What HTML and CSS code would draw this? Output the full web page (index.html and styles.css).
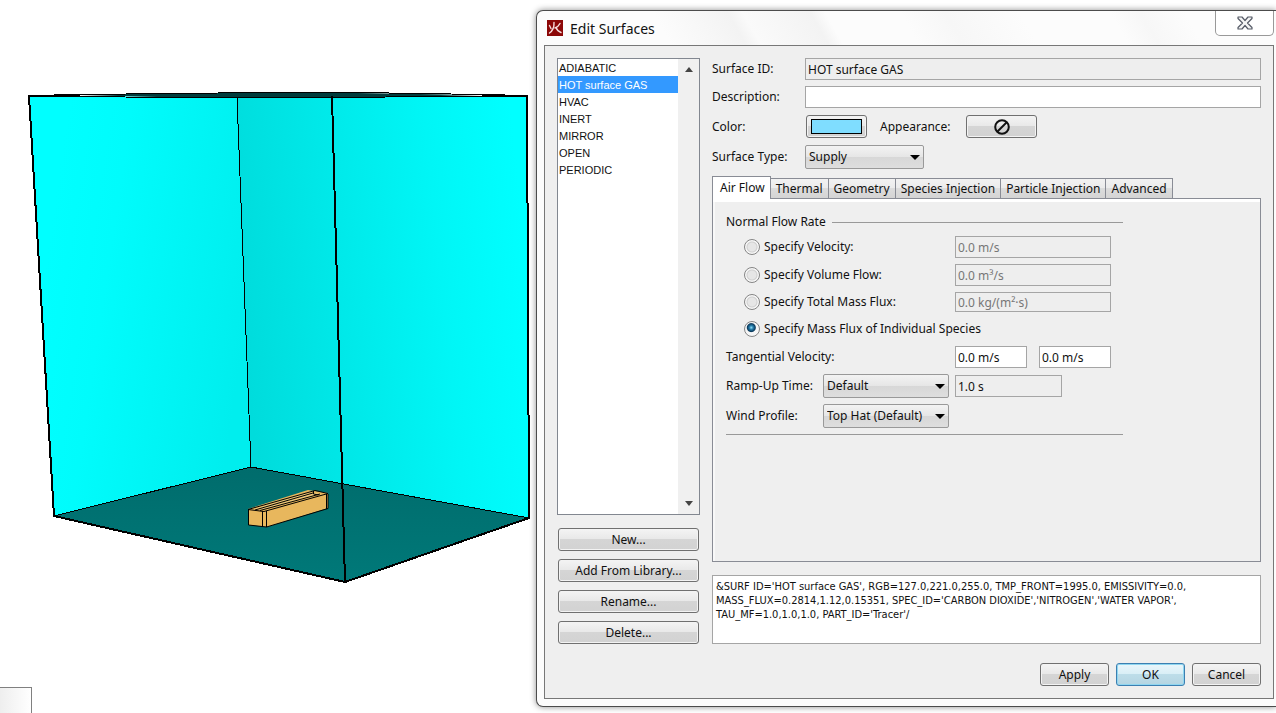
FILE: index.html
```html
<!DOCTYPE html>
<html lang="en">
<head>
<meta charset="utf-8">
<title>Edit Surfaces</title>
<link rel="stylesheet" href="styles.css">
</head>
<body>
<main class="workspace">
  <section class="scene" aria-label="3D view">
    <svg class="scene-view" viewBox="0 0 536 687" role="img" aria-label="Room model">
      <defs>
        <linearGradient id="wallLeft" gradientUnits="userSpaceOnUse" x1="40" y1="300" x2="245" y2="330">
          <stop offset="0" stop-color="#00ffff"/><stop offset="0.3" stop-color="#00fcfc"/><stop offset="1" stop-color="#00eeee"/>
        </linearGradient>
        <linearGradient id="wallBack" gradientUnits="userSpaceOnUse" x1="240" y1="300" x2="528" y2="270">
          <stop offset="0" stop-color="#00dcdc"/><stop offset="0.35" stop-color="#00e9e9"/><stop offset="0.7" stop-color="#00f6f6"/><stop offset="1" stop-color="#00ffff"/>
        </linearGradient>
        <linearGradient id="floor" x1="0" y1="0" x2="0" y2="1">
          <stop offset="0" stop-color="#006c6c"/><stop offset="1" stop-color="#007979"/>
        </linearGradient>
      </defs>
      <path d="M29 96 237 97 251 467 54 516z" fill="url(#wallLeft)"/>
      <path d="M237 97 527 96 529 518 251 467z" fill="url(#wallBack)"/>
      <path d="M54 516 251 467 529 518 345 582z" fill="url(#floor)"/>
      <path d="M80 95 172 93 264 93 358 93 420 94 482 95 440 96 332 98 157 97z" fill="#003c3c"/>
      <g fill="none" stroke="#000" shape-rendering="crispEdges">
        <path d="M29 95.500 80 94.500 172 93.500 264 92.500 358 92.500 420 93.500 482 94.500 527 95.500M29 95.500 157 97.500 332 97.500 440 96.500 527 95.500"/>
        <path d="M237 97 251 467M54 516 251 467 529 518"/>
        <path d="M29 96 54 516 345 582 529 518 527 96M332 96 345 582M28 96h52M482 96h46" stroke-width="2"/>
      </g>
      <path d="M248 509 308 490 328 493 328 508 267 527 249 525z" fill="#e8b75d"/>
      <path d="M253 509 309 492 321 494 262 510z" fill="#efc878"/>
      <g fill="none" stroke="#000">
        <path d="M248 509.500 264 511.500 328 493.500 315 490.500zM248.500 509v16l18 2L328 508.500V494"/>
        <path d="M255 510 313 493M260 510.500 320 494M313.500 491v3l5 1M262.500 511v16M266.500 511v16M326.500 494v15" stroke-width="1"/>
      </g>
    </svg>
    <div class="dock-corner"></div>
  </section>

  <section class="dialog" role="dialog" aria-labelledby="dialog-title">
    <header class="titlebar">
      <svg class="app-icon" viewBox="0 0 16 16" aria-hidden="true">
        <rect width="16" height="16" fill="#8c0707"/>
        <path d="M7 2.500c.3 5-1 8-4.500 10.500M9 7.500c1 2.500 2.500 4.200 5 5M2.500 5.500l1.500 3M13 3.500c-1 2-2.500 3.500-5 4.500" fill="none" stroke="#f8dede" stroke-width="1.400" stroke-linecap="round"/>
      </svg>
      <h1 class="title" id="dialog-title">Edit Surfaces</h1>
      <button class="close" aria-label="Close">
        <svg viewBox="0 0 16 14" width="16" height="14" aria-hidden="true">
          <path d="M1 1h4l3 3.500L11 1h4v1.500L10.500 7 15 11.500V13h-4L8 9.500 5 13H1v-1.500L5.500 7 1 2.500z" fill="#f4f4f4" stroke="#555a66" stroke-width="1.200" stroke-linejoin="round"/>
        </svg>
      </button>
    </header>

    <div class="frame">
      <div class="columns">
        <aside class="sidebar">
          <div class="listbox">
            <ul class="items" role="listbox" aria-label="Surfaces">
              <li class="item" role="option">ADIABATIC</li>
              <li class="item selected" role="option" aria-selected="true">HOT surface GAS</li>
              <li class="item" role="option">HVAC</li>
              <li class="item" role="option">INERT</li>
              <li class="item" role="option">MIRROR</li>
              <li class="item" role="option">OPEN</li>
              <li class="item" role="option">PERIODIC</li>
            </ul>
            <div class="scrollbar" aria-hidden="true">
              <span class="tri up"></span>
              <span class="tri down"></span>
            </div>
          </div>
          <div class="actions">
            <button class="btn">New...</button>
            <button class="btn">Add From Library...</button>
            <button class="btn">Rename...</button>
            <button class="btn">Delete...</button>
          </div>
        </aside>

        <form class="details">
          <div class="row">
            <label class="label" for="surface-id">Surface ID:</label>
            <input class="field readonly grow" id="surface-id" value="HOT surface GAS" readonly>
          </div>
          <div class="row">
            <label class="label" for="description">Description:</label>
            <input class="field grow" id="description">
          </div>
          <div class="row buttons-row">
            <label class="label" for="color">Color:</label>
            <button class="btn color-btn" id="color" type="button" aria-label="Color"><span class="swatch"></span></button>
            <label class="appearance-label" for="appearance">Appearance:</label>
            <button class="btn appearance-btn" id="appearance" type="button" aria-label="Appearance">
              <svg viewBox="0 0 16 16" width="16" height="16" aria-hidden="true"><circle cx="8" cy="8" r="6.800" fill="none" stroke="#111" stroke-width="2"/><path d="M12.500 3.500l-9 9" stroke="#111" stroke-width="2"/></svg>
            </button>
          </div>
          <div class="row">
            <label class="label" for="surface-type">Surface Type:</label>
            <span class="combo combo-type"><select id="surface-type"><option>Supply</option></select></span>
          </div>

          <div class="tabs" role="tablist">
            <button class="tab active" type="button" role="tab" aria-selected="true">Air Flow</button>
            <button class="tab" type="button" role="tab">Thermal</button>
            <button class="tab" type="button" role="tab">Geometry</button>
            <button class="tab" type="button" role="tab">Species Injection</button>
            <button class="tab" type="button" role="tab">Particle Injection</button>
            <button class="tab" type="button" role="tab">Advanced</button>
          </div>
          <div class="panel" role="tabpanel">
            <div class="flow">
              <div class="section-title"><span>Normal Flow Rate</span><span class="rule"></span></div>
              <div class="flow-row">
                <label class="choice"><input type="radio" name="flow">Specify Velocity:</label>
                <input class="field long" aria-label="Velocity" value="0.0 m/s" disabled>
              </div>
              <div class="flow-row">
                <label class="choice"><input type="radio" name="flow">Specify Volume Flow:</label>
                <input class="field long" aria-label="Volume flow" value="0.0 m³/s" disabled>
              </div>
              <div class="flow-row">
                <label class="choice"><input type="radio" name="flow">Specify Total Mass Flux:</label>
                <input class="field long low" aria-label="Total mass flux" value="0.0 kg/(m²·s)" disabled>
              </div>
              <div class="flow-row single">
                <label class="choice"><input type="radio" name="flow" checked>Specify Mass Flux of Individual Species</label>
              </div>
              <div class="flow-row">
                <label for="tan-u">Tangential Velocity:</label>
                <div class="pair">
                  <input class="field short" id="tan-u" value="0.0 m/s">
                  <input class="field short" aria-label="Tangential velocity, second component" value="0.0 m/s">
                </div>
              </div>
              <div class="profile-row">
                <label for="ramp">Ramp-Up Time:</label>
                <span class="combo"><select id="ramp"><option>Default</option></select></span>
                <input class="field readonly ramp-value" aria-label="Ramp-up time value" value="1.0 s" readonly>
              </div>
              <div class="profile-row">
                <label for="wind">Wind Profile:</label>
                <span class="combo"><select id="wind"><option>Top Hat (Default)</option></select></span>
              </div>
              <hr class="end-rule">
            </div>
          </div>
          <textarea class="record" aria-label="FDS record" readonly>&amp;SURF ID='HOT surface GAS', RGB=127.0,221.0,255.0, TMP_FRONT=1995.0, EMISSIVITY=0.0,
MASS_FLUX=0.2814,1.12,0.15351, SPEC_ID='CARBON DIOXIDE','NITROGEN','WATER VAPOR',
TAU_MF=1.0,1.0,1.0, PART_ID='Tracer'/</textarea>
        </form>
      </div>

      <footer class="footer">
        <button class="btn">Apply</button>
        <button class="btn primary">OK</button>
        <button class="btn">Cancel</button>
      </footer>
    </div>
  </section>
</main>
</body>
</html>
```
FILE: styles.css
```css
* { box-sizing: border-box; }

body {
  margin: 0;
  background: #fff;
  color: #111;
  font: 12px/16px "Noto Sans", "DejaVu Sans Condensed", sans-serif;
}

button, input, select, textarea { font: inherit; color: inherit; margin: 0; }

.workspace {
  display: grid;
  grid-template-columns: 536px minmax(0, 1fr);
  min-height: 100vh;
  overflow: hidden;
}

/* 3D view */
.scene { display: flex; flex-direction: column; justify-content: space-between; }
.scene-view { display: block; width: 100%; }
.dock-corner {
  width: 32px;
  height: 26px;
  border: solid #808080;
  border-width: 1px 1px 0 0;
  background: linear-gradient(90deg, #eee, #fff);
}

/* Dialog window */
.dialog {
  display: flex;
  flex-direction: column;
  margin: 10px 0 6px;
  padding: 0 2px 7px 7px;
  border: 1px solid #4c4c4c;
  border-right: 0;
  border-radius: 7px 0 0 7px;
  background: #fcfcfc;
  box-shadow: 0 0 6px rgba(0, 0, 0, 0.45);
}
.titlebar {
  display: flex;
  height: 34px;
  background: linear-gradient(60deg, transparent 17%, #f3f3f3 27%, #fafafa 29%, #f3f3f3 38%, transparent 40%, transparent 50%, #f7f7f7 56%, transparent 66%, transparent 78%, #f7f7f7 82%, transparent 88%);
}
.app-icon { width: 16px; height: 16px; margin: 9px 7px 0 3px; }
.title { margin: 8px 0 0; font: 14px/20px "Noto Sans", sans-serif; }
.close {
  display: flex;
  justify-content: center;
  width: 59px;
  height: 25px;
  margin-left: auto;
  padding: 5px 0 0;
  border: 1px solid #999;
  border-top: 0;
  border-radius: 0 0 5px 5px;
  background: #fff;
}

.frame {
  display: flex;
  flex: 1;
  flex-direction: column;
  padding: 12px;
  border: 1px solid #777;
  background: #efefef;
}
.columns {
  display: grid;
  flex: 1;
  grid-template-columns: 143px minmax(0, 1fr);
  column-gap: 12px;
}

/* Buttons */
.btn {
  height: 23px;
  padding: 0;
  border: 1px solid #707070;
  border-radius: 3px;
  background: linear-gradient(#f4f4f4, #e8e8e8 49%, #d5d5d5 50%, #d2d2d2);
  box-shadow: inset 0 0 0 1px #f3f3f3;
}

/* Surface list */
.sidebar { display: flex; flex-direction: column; gap: 13px; }
.listbox {
  display: flex;
  flex: 1;
  border: 1px solid #828790;
  background: #fff;
}
.items {
  flex: 1;
  margin: 0;
  padding: 0;
  list-style: none;
  font: 11px/16px "Liberation Sans", Arial, sans-serif;
}
.item { padding: 1px 0 0 1px; }
.item.selected { background: #3399ff; color: #fff; }
.scrollbar {
  display: flex;
  flex-direction: column;
  justify-content: space-between;
  align-items: center;
  width: 21px;
  padding: 8px 0;
  background: #f0f0f0;
}
.tri { border: solid transparent; border-width: 0 4px; }
.up { border-bottom: 5px solid #444; }
.down { border-top: 5px solid #444; }
.actions { display: flex; flex-direction: column; gap: 8px; padding: 0 1px; }

/* Surface properties */
.details { display: flex; flex-direction: column; }
.row { display: flex; align-items: center; margin-bottom: 6px; }
.label { width: 93px; }
.field {
  height: 22px;
  min-width: 0;
  padding: 0 2px;
  border: 1px solid #a5a5a5;
  border-radius: 0;
  background: #fff;
}
.field.readonly, .field:disabled { background: #eee; }
.field:disabled { color: #777; }
.grow { flex: 1; }
.buttons-row { margin: 1px 0 7px; }
.color-btn { width: 61px; margin: 0 13px 0 1px; padding: 0 4px; }
.swatch {
  display: block;
  height: 15px;
  border: 1px solid #000;
  background: #7fddff;
}
.appearance-label { width: 86px; }
.appearance-btn { display: flex; align-items: center; justify-content: center; width: 71px; }

.combo { position: relative; display: block; width: 126px; height: 24px; }
.combo-type { width: 119px; }
.combo select {
  width: 100%;
  height: 100%;
  padding: 0 3px;
  border: 1px solid #999;
  border-radius: 2px;
  appearance: none;
  background: linear-gradient(#f3f3f3, #e6e6e6 49%, #d7d7d7 50%, #dedede);
}
.combo::after {
  content: "";
  position: absolute;
  top: 10px;
  right: 4px;
  border: solid transparent;
  border-width: 5px 5px 0;
  border-top-color: #000;
  pointer-events: none;
}

/* Tabs */
.tabs { display: flex; align-items: flex-end; margin-top: 1px; }
.tab {
  height: 20px;
  margin-right: -1px;
  padding: 0 5px;
  border: 1px solid #898c95;
  border-bottom: 0;
  background: linear-gradient(#f2f2f2, #ebebeb 49%, #dcdcdc 50%, #d4d4d4);
}
.tab.active {
  z-index: 1;
  height: 23px;
  margin-bottom: -1px;
  padding: 0 5px 0 7px;
  background: #fff;
}
.panel {
  flex: 1;
  padding: 12px 13px;
  border: 1px solid #898c95;
  background: #efefef;
  box-shadow: inset 0 3px #fff, inset 2px 0 #f8f8f8;
}
.flow { display: flex; flex-direction: column; gap: 6px; width: 397px; padding-top: 3px; }
.section-title { display: flex; align-items: center; gap: 6px; }
.rule { flex: 1; height: 1px; background: #999; }
.flow-row {
  display: grid;
  grid-template-columns: 229px minmax(0, 1fr);
  align-items: center;
}
.flow-row.single { grid-template-columns: 1fr; height: 22px; }
.long { width: 156px; }
.low { height: 20px; }
.choice { display: flex; align-items: center; gap: 4px; padding-left: 18px; }
.choice input {
  width: 16px;
  height: 16px;
  border: 1px solid #858585;
  border-radius: 50%;
  appearance: none;
  background: radial-gradient(circle, #e6e6e6 0 4px, #cfcfcf 5px, #f7f7f7 6px);
}
.choice input:checked {
  background: radial-gradient(circle at 45% 40%, #8edcf5 0, #247aa8 2px, #0c3a5c 4px, transparent 5px), #f6f6f6;
}
.pair { display: flex; gap: 12px; }
.short { width: 72px; }
.profile-row { display: grid; grid-template-columns: 97px 126px 113px; align-items: center; }
.ramp-value { width: 107px; margin-left: 6px; }
.end-rule { width: 100%; height: 1px; margin: 0; border: 0; background: #999; }

.record {
  display: block;
  height: 69px;
  margin-top: 13px;
  padding: 4px 3px;
  border: 1px solid #a5a5a5;
  border-radius: 0;
  resize: none;
  background: #fff;
  font-family: "DejaVu Sans Condensed", sans-serif;
  font-size: 11px;
  line-height: 14px;
}

.footer { display: flex; justify-content: flex-end; gap: 7px; margin-top: 19px; }
.footer .btn { width: 69px; }
.footer .primary {
  border-color: #3c7fb1;
  background: linear-gradient(#eaf6fb, #d8eef6 49%, #bddde9 50%, #b5d5e2);
  box-shadow: inset 0 0 0 1px #8fd6f0;
}
```
